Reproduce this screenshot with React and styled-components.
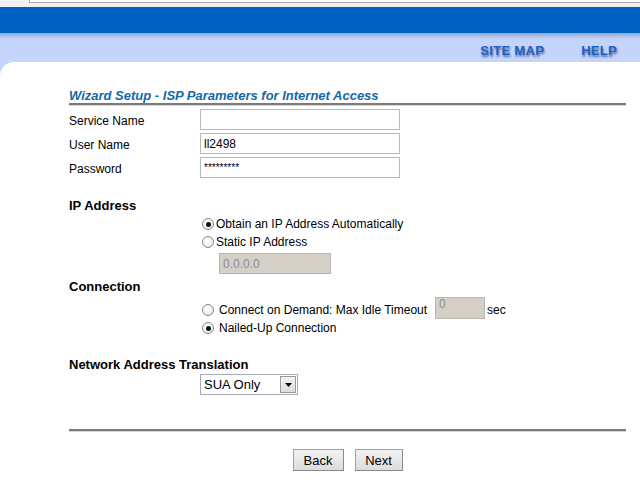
import styled, { createGlobalStyle } from "styled-components";

const GlobalStyle = createGlobalStyle`
  html, body {
    margin: 0;
    padding: 0;
    background: #ffffff;
    font-family: "Liberation Sans", Arial, sans-serif;
    font-size: 12px;
    color: #000;
  }
`;

const App = () => {
  return (
    <>
      <GlobalStyle />
      <TopStrip>
        <FrameEdge />
      </TopStrip>
      <Banner />
      <Shade />
      <NavBar>
        <NavLink>SITE MAP</NavLink>
        <NavLink>HELP</NavLink>
      </NavBar>
      <Body>
        <Content>
          <Title>Wizard Setup - ISP Parameters for Internet Access</Title>

          <FieldGrid>
            <Label>Service Name</Label>
            <TextBox value="" />
            <Label>User Name</Label>
            <TextBox value="ll2498" />
            <Label>Password</Label>
            <TextBox value="*********" $small />
          </FieldGrid>

          <SectionTitle $top={20}>IP Address</SectionTitle>
          <OptionList>
            <Option>
              <Radio $checked />
              Obtain an IP Address Automatically
            </Option>
            <Option>
              <Radio />
              Static IP Address
            </Option>
            <Indent>
              <DisabledBox $width={112}>0.0.0.0</DisabledBox>
            </Indent>
          </OptionList>

          <SectionTitle $top={5}>Connection</SectionTitle>
          <OptionList $top={9}>
            <Option $gap={5}>
              <Radio />
              Connect on Demand: Max Idle Timeout
              <DisabledBox $width={50} $tall>0</DisabledBox>
              <span>sec</span>
            </Option>
            <Option $gap={5}>
              <Radio $checked />
              Nailed-Up Connection
            </Option>
          </OptionList>

          <SectionTitle $top={22}>Network Address Translation</SectionTitle>
          <SelectRow>
            <Select>
              <span>SUA Only</span>
              <DropButton>
                <svg width="7" height="4" viewBox="0 0 7 4">
                  <path d="M0 0 L7 0 L3.5 4 Z" fill="#000" />
                </svg>
              </DropButton>
            </Select>
          </SelectRow>

          <Divider />

          <ButtonRow>
            <Button $width={51}>Back</Button>
            <Button $width={48}>Next</Button>
          </ButtonRow>
        </Content>
      </Body>
    </>
  );
};

export default App;

const TopStrip = styled.div`
  height: 7px;
  background: #eef0f2;
  position: relative;
  overflow: hidden;
`;

const FrameEdge = styled.div`
  position: absolute;
  left: 29px;
  right: 0;
  top: -2px;
  height: 3px;
  background: #fff;
  border: 1px solid #a8a8a8;
  border-right: none;
`;

const Banner = styled.div`
  height: 26px;
  background: #0061c2;
`;

const Shade = styled.div`
  height: 6px;
  background: linear-gradient(180deg, #8ea3cc 0%, #aebfe6 50%, #c4d3fb 100%);
`;

const NavBar = styled.div`
  height: 23px;
  background: #c5d4fb;
  display: flex;
  justify-content: flex-end;
  align-items: center;
  gap: 37px;
  padding-right: 23px;
`;

const NavLink = styled.span`
  font-family: "Liberation Sans", Arial, sans-serif;
  font-weight: bold;
  font-size: 13px;
  color: #1c62c4;
  text-shadow: 1px 2px 2px rgba(0, 30, 90, 0.55);
  letter-spacing: 0.3px;
  margin-top: -1px;
`;

const Body = styled.div`
  background: #c5d4fb;
`;

const Content = styled.div`
  background: #fff;
  border-top-left-radius: 14px;
  padding: 26px 14px 20px 69px;
  min-height: 380px;
`;

const Title = styled.div`
  font-family: "Liberation Sans", Arial, sans-serif;
  font-weight: bold;
  font-style: italic;
  font-size: 13px;
  color: #1469a6;
  line-height: 15px;
  border-bottom: 2px solid #7a7a7a;
  box-shadow: 0 1px 0 #d8d8d8;
`;

const FieldGrid = styled.div`
  display: grid;
  grid-template-columns: 131px 200px;
  grid-auto-rows: 21px;
  row-gap: 3px;
  align-items: center;
  margin-top: 4px;
`;

const Label = styled.span`
  font-size: 12px;
  padding-top: 2px;
`;

const TextBox = styled.input.attrs({ readOnly: true, type: "text" })`
  box-sizing: border-box;
  width: 200px;
  height: 21px;
  border: 1px solid #b4bac2;
  background: #fff;
  padding: 0 3px;
  font-family: "Liberation Sans", Arial, sans-serif;
  font-size: ${(p) => (p.$small ? "10px" : "12px")};
  color: #000;
  outline: none;
  margin: 0;
`;

const SectionTitle = styled.div`
  font-weight: bold;
  font-size: 13px;
  line-height: 15px;
  margin-top: ${(p) => p.$top}px;
`;

const OptionList = styled.div`
  display: flex;
  flex-direction: column;
  gap: 4px;
  margin-top: ${(p) => p.$top ?? 4}px;
  padding-left: 133px;
`;

const Option = styled.div`
  display: flex;
  align-items: center;
  gap: ${(p) => p.$gap ?? 2}px;
  height: 14px;
  font-size: 12px;
  white-space: nowrap;
`;

const Radio = styled.span`
  box-sizing: border-box;
  width: 12px;
  height: 12px;
  border-radius: 50%;
  border: 1px solid #8a8a8a;
  background: radial-gradient(circle at 35% 35%, #ffffff 0%, #f0f0f0 60%, #d8d8d8 100%);
  display: inline-flex;
  align-items: center;
  justify-content: center;
  flex: 0 0 auto;

  &::after {
    content: "";
    display: ${(p) => (p.$checked ? "block" : "none")};
    width: 5px;
    height: 5px;
    border-radius: 50%;
    background: #111;
  }
`;

const Indent = styled.div`
  padding-left: 17px;
`;

const DisabledBox = styled.span`
  box-sizing: border-box;
  display: inline-flex;
  align-items: ${(p) => (p.$tall ? "flex-start" : "center")};
  width: ${(p) => p.$width}px;
  height: ${(p) => (p.$tall ? 22 : 21)}px;
  background: #d4d0c8;
  border: 1px solid #b9b5ad;
  color: #8c8c8c;
  padding: 0 3px;
  font-size: 12px;
  margin: ${(p) => (p.$tall ? "-4px -3px 0 3px" : "0")};
  line-height: ${(p) => (p.$tall ? "13px" : "normal")};
`;

const SelectRow = styled.div`
  padding-left: 131px;
  margin-top: 2px;
`;

const Select = styled.div`
  box-sizing: border-box;
  width: 98px;
  height: 21px;
  border: 1px solid #a5acb5;
  background: #fff;
  display: flex;
  align-items: center;
  justify-content: space-between;
  padding: 0 1px 0 3px;
  font-size: 13px;
`;

const DropButton = styled.span`
  box-sizing: border-box;
  width: 16px;
  height: 17px;
  border: 1px solid #9a9a9a;
  background: linear-gradient(180deg, #f4f4f4, #dcdcdc);
  display: flex;
  align-items: center;
  justify-content: center;
`;

const Divider = styled.div`
  margin-top: 34px;
  border-top: 2px solid #7a7a7a;
  box-shadow: 0 1px 0 #d8d8d8;
`;

const ButtonRow = styled.div`
  display: flex;
  justify-content: center;
  gap: 11px;
  margin-top: 18px;
`;

const Button = styled.button`
  box-sizing: border-box;
  width: ${(p) => p.$width}px;
  height: 22px;
  font-family: "Liberation Sans", Arial, sans-serif;
  font-size: 13px;
  color: #000;
  background: linear-gradient(180deg, #f2f2f2, #dcdcdc);
  border: 1px solid #a0a0a0;
  border-right-color: #8a8a8a;
  border-bottom-color: #8a8a8a;
  padding: 0;
`;
